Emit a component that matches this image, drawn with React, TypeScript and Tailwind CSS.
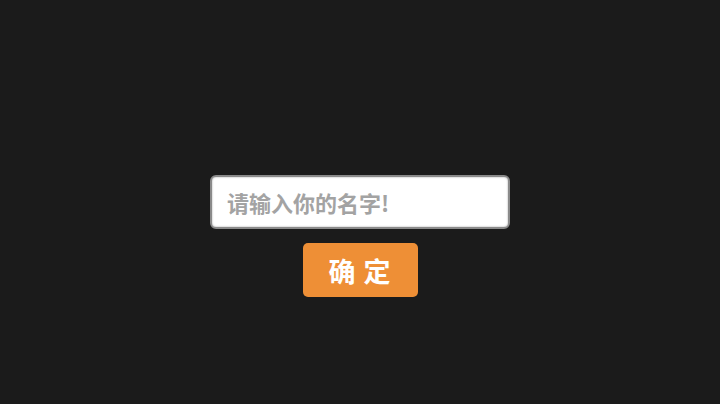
export default function App() {
  return (
    <div
      className="w-[720px] h-[404px] bg-[#1b1b1b] flex flex-col items-center pt-[175px] gap-[14px]"
      style={{ fontFamily: '"Noto Sans CJK SC", "Noto Sans", sans-serif' }}
    >
      <div className="w-[300px] h-[54px] bg-white border-2 border-[#8a8a8a] rounded-[6px] flex items-center pl-[15px] shadow-[inset_0_0_2px_rgba(0,0,0,0.4)]">
        <span className="text-[22px] font-bold text-[#a3a3a3] leading-none">
          请输入你的名字!
        </span>
      </div>
      <button className="w-[115px] h-[54px] bg-[#ee8f36] rounded-[5px] text-white text-[27px] font-bold leading-none tracking-[1px]">
        确 定
      </button>
    </div>
  );
}
